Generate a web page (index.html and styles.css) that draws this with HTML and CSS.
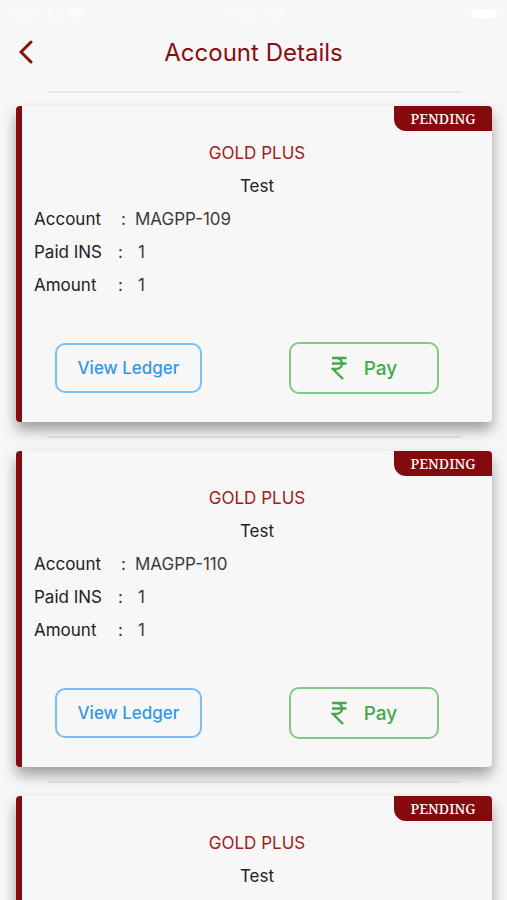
FILE: index.html
```html
<!DOCTYPE html>
<html lang="en">
<head>
<meta charset="utf-8">
<meta name="viewport" content="width=device-width, initial-scale=1">
<title>Account Details</title>
<link rel="stylesheet" href="styles.css">
</head>
<body>
<div class="status">
  <span class="status-left"><span>IDEA 4G</span><svg width="18" height="14" viewBox="0 0 16 13" aria-hidden="true"><path d="M1 5 Q8 -2 15 5 M4 8 Q8 4 12 8" fill="none" stroke="currentColor" stroke-width="3"/><circle cx="8" cy="11" r="2" fill="currentColor"/></svg></span>
  <span class="status-time">11:54 AM</span>
  <span class="battery"></span>
</div>
<header class="header">
  <button class="back" type="button" aria-label="Back"><svg width="14" height="24" viewBox="0 0 14 24" aria-hidden="true"><path d="M12 2 L2 12 L12 22" fill="none" stroke="currentColor" stroke-width="3" stroke-linecap="round" stroke-linejoin="miter"/></svg></button>
  <h1>Account Details</h1>
</header>
<main class="list">
  <hr>
  <article class="card">
    <span class="badge">PENDING</span>
    <h2>GOLD PLUS</h2>
    <p class="name">Test</p>
    <dl>
      <div class="row account"><dt>Account</dt><dd>MAGPP-109</dd></div>
      <div class="row"><dt>Paid INS</dt><dd>1</dd></div>
      <div class="row"><dt>Amount</dt><dd>1</dd></div>
    </dl>
    <div class="actions">
      <button class="ledger" type="button">View Ledger</button>
      <button class="pay" type="button"><svg width="16" height="24" viewBox="0 0 16 24" aria-hidden="true"><path d="M1 2 H15.500 M1 7.500 H15.500 M1 2 H5 C13 2 13 13 5 13 H2 L12 23" fill="none" stroke="currentColor" stroke-width="2.400"/></svg>Pay</button>
    </div>
  </article>
  <hr>
  <article class="card">
    <span class="badge">PENDING</span>
    <h2>GOLD PLUS</h2>
    <p class="name">Test</p>
    <dl>
      <div class="row account"><dt>Account</dt><dd>MAGPP-110</dd></div>
      <div class="row"><dt>Paid INS</dt><dd>1</dd></div>
      <div class="row"><dt>Amount</dt><dd>1</dd></div>
    </dl>
    <div class="actions">
      <button class="ledger" type="button">View Ledger</button>
      <button class="pay" type="button"><svg width="16" height="24" viewBox="0 0 16 24" aria-hidden="true"><path d="M1 2 H15.500 M1 7.500 H15.500 M1 2 H5 C13 2 13 13 5 13 H2 L12 23" fill="none" stroke="currentColor" stroke-width="2.400"/></svg>Pay</button>
    </div>
  </article>
  <hr>
  <article class="card">
    <span class="badge">PENDING</span>
    <h2>GOLD PLUS</h2>
    <p class="name">Test</p>
  </article>
</main>
</body>
</html>
```
FILE: styles.css
```css
* { box-sizing: border-box; }

body {
  margin: 0;
  height: 100vh;
  overflow: hidden;
  background: #f7f7f7;
  color: #222;
  font: 17px/33px Inter, "Liberation Sans", sans-serif;
}

h1, h2, p, dl, dd { margin: 0; font-weight: 400; }
button { font-family: inherit; background: none; cursor: pointer; }

.status {
  display: grid;
  grid-template-columns: 1fr auto 1fr;
  align-items: center;
  height: 28px;
  padding: 0 10px;
  color: #fcfcfc;
  font-size: 14px;
  line-height: 28px;
}
.status-left { display: flex; align-items: center; gap: 4px; }
.status-left svg { flex: none; }
.battery {
  justify-self: end;
  width: 26px;
  height: 10px;
  border-radius: 4px;
  background: #fff;
}

.header {
  display: grid;
  grid-template-columns: 48px 1fr 48px;
  align-items: center;
  height: 48px;
  color: #8b0c10;
}
.header h1 { font-size: 24px; text-align: center; }
.back {
  display: flex;
  padding: 4px 14px 4px 19px;
  border: 0;
  color: inherit;
}
.back svg { flex: none; }

.list { padding: 15px 15px 0 16px; }
hr {
  height: 2px;
  margin: 0 31px;
  border: 0;
  background: #e6e6e6;
}

.card {
  position: relative;
  height: 316px;
  margin: 13px 0 14px;
  padding: 31px 12px 0;
  border-left: 6px solid #850a0d;
  border-radius: 4px;
  background: #f7f7f7;
  box-shadow: 0 8px 14px rgba(0, 0, 0, 0.36);
}
.card h2 { color: #a01c20; font-size: 17px; text-align: center; }
.name { text-align: center; }

.badge {
  position: absolute;
  top: 0;
  right: 0;
  width: 98px;
  border-radius: 0 4px 0 12px;
  background: #850a0d;
  color: #fff;
  font: 500 14px/25px "Noto Serif", "Liberation Serif", serif;
  text-align: center;
}

.row { display: flex; }
dt { width: 84px; }
.account dt { width: 87px; }
dd { color: #3c3c3c; }
dd::before { content: ":"; display: inline-block; width: 20px; }
.account dd::before { width: 14px; }

.actions {
  display: flex;
  align-items: center;
  justify-content: space-between;
  margin: 40px 41px 0 21px;
}
.ledger, .pay {
  display: flex;
  align-items: center;
  justify-content: center;
  border: 2px solid #7cbdf4;
  border-radius: 10px;
  font-weight: 500;
}
.ledger { width: 147px; height: 50px; color: #3598e8; font-size: 17px; }
.pay {
  gap: 17px;
  width: 150px;
  height: 52px;
  border-color: #83c986;
  color: #43a948;
  font-size: 19px;
}
```
